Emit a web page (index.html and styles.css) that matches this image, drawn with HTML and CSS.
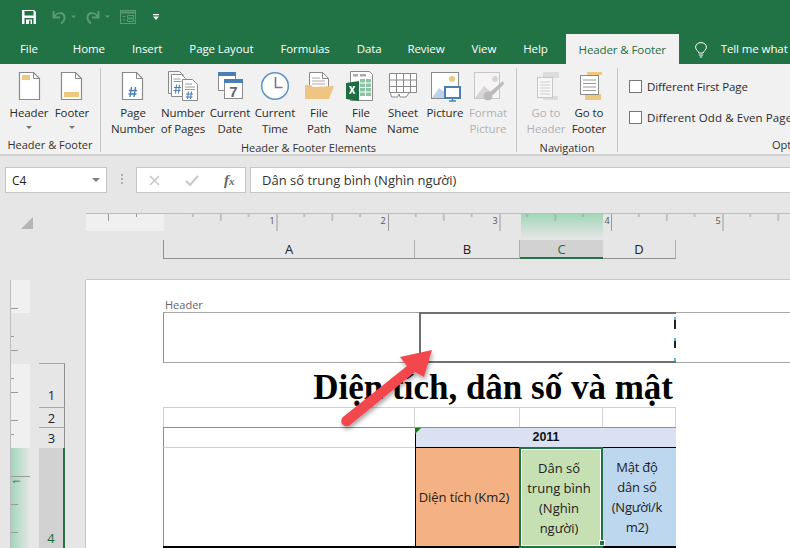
FILE: index.html
```html
<!DOCTYPE html>
<html lang="vi">
<head>
<meta charset="utf-8">
<title>Excel Header &amp; Footer</title>
<link rel="stylesheet" href="styles.css">
</head>
<body>
<div class="app">
  <div class="qat">
    <svg class="qi save" width="14" height="14" viewBox="0 0 14 14"><path d="M0 0h12l2 2v12H0z" fill="#fff"/><rect x="2.500" y="1" width="9" height="4.500" fill="#217346"/><rect x="2.500" y="8" width="9" height="6" fill="#217346"/><rect x="4" y="9.500" width="6" height="4.500" fill="#fff"/><rect x="7" y="10.500" width="1.500" height="3.500" fill="#217346"/></svg>
    <svg class="qi undo" width="26" height="16" viewBox="0 0 26 16"><path d="M2.500 2v6.500h6.500M3 8.500c2-5.500 9.500-6 10.500-.5.5 3-1.500 5-3.500 6.500" fill="none" stroke="#5a9a78" stroke-width="2"/><path d="M20 6.500h5l-2.500 2.500z" fill="#5a9a78"/></svg>
    <svg class="qi redo" width="26" height="16" viewBox="0 0 26 16"><path d="M12.500 2v6.500H6M12 8.500C10 3 2.500 2.500 1.500 8c-.5 3 1.500 5 3.500 6.500" fill="none" stroke="#5a9a78" stroke-width="2"/><path d="M19 6.500h5l-2.500 2.500z" fill="#5a9a78"/></svg>
    <svg class="qi form" width="16" height="14" viewBox="0 0 16 14"><rect x=".5" y=".5" width="15" height="13" fill="none" stroke="#5a9a78"/><path d="M1 2.500h14" stroke="#5a9a78" stroke-width="2"/><path d="M2.500 6.500h3M2.500 10h3M7.500 5.500h6v2.500h-6zM7.500 9h6v2.500h-6z" fill="none" stroke="#5a9a78"/></svg>
    <svg class="qi more" width="6" height="6" viewBox="0 0 6 6"><path d="M0 0h6v1.300H0z" fill="#fff"/><path d="M0 2.500h6L3 6z" fill="#fff"/></svg>
  </div>
  <nav class="tabs">
    <span class="tab t-file">File</span>
    <span class="tab t-home">Home</span>
    <span class="tab t-insert">Insert</span>
    <span class="tab t-layout">Page Layout</span>
    <span class="tab t-formulas">Formulas</span>
    <span class="tab t-data">Data</span>
    <span class="tab t-review">Review</span>
    <span class="tab t-view">View</span>
    <span class="tab t-help">Help</span>
    <span class="tab active">Header &amp; Footer</span>
    <svg class="bulb" width="12" height="16" viewBox="0 0 12 16"><path d="M3.800 11C3.400 8.800.6 8 .6 5.200.6 2.500 3 .6 6 .6s5.400 1.900 5.400 4.600c0 2.800-2.800 3.600-3.200 5.800z" fill="none" stroke="#fff"/><path d="M3.800 13h4.400M4.800 15h2.400" stroke="#fff"/></svg>
    <span class="tab tell">Tell me what</span>
  </nav>
  <section class="ribbon">
    <div class="group g-hf">
      <div class="btns">
        <div class="btn w-44">
          <svg class="ico" width="32" height="32" viewBox="0 0 32 32"><path d="M6.500 .5h14l6 6v21h-20z" fill="#fff" stroke="#8a8a8a" stroke-width="1.200"/><path d="M20.500 .5v6h6" fill="none" stroke="#8a8a8a"/><rect x="9" y="3" width="8" height="5" fill="#edc87e"/></svg>
          <span class="lbl">Header</span><span class="caret"></span>
        </div>
        <div class="btn w-42">
          <svg class="ico" width="32" height="32" viewBox="0 0 32 32"><path d="M5.500 .5h14l6 6v21h-20z" fill="#fff" stroke="#8a8a8a" stroke-width="1.200"/><path d="M19.500 .5v6h6" fill="none" stroke="#8a8a8a"/><rect x="8" y="20" width="15" height="5" fill="#edc87e"/></svg>
          <span class="lbl">Footer</span><span class="caret"></span>
        </div>
      </div>
      <div class="gname">Header &amp; Footer</div>
    </div>
    <div class="group g-el">
      <div class="btns">
        <div class="btn w-50">
          <svg class="ico" width="32" height="32" viewBox="0 0 32 32"><path d="M5.500 .5h14l6 6v21h-20z" fill="#fff" stroke="#8a8a8a" stroke-width="1.200"/><path d="M19.500 .5v6h6" fill="none" stroke="#8a8a8a"/><path d="M14.500 15l-1.500 10M18.500 15l-1.500 10M12 18.500h8M11.500 22h8" stroke="#4a7fb5" stroke-width="1.400" fill="none"/></svg>
          <span class="lbl">Page<br>Number</span>
        </div>
        <div class="btn w-50">
          <svg class="ico" width="32" height="32" viewBox="0 0 32 32"><path d="M1.500 -.5h11l4 4v18h-15z" fill="#f4f4f4" stroke="#8a8a8a"/><path d="M4.500 2.500h10l4 4v18h-14z" fill="#fff" stroke="#8a8a8a"/><path d="M6.500 7h7M6.500 9.500h8" stroke="#9a9a9a"/><path d="M9.500 12.500l-1 9M12.500 12.500l-1 9M7 15.500h7M6.500 18.500h7" stroke="#4a7fb5" stroke-width="1.100" fill="none"/><path d="M15.500 7.500h10l5 5v16h-15z" fill="#fff" stroke="#8a8a8a"/><path d="M18 12h7M18 15h10M18 17.500h10" stroke="#9a9a9a"/><path d="M21.500 19.500l-1 7.500M24.500 19.500l-1 7.500M19 22h7M18.500 25h7" stroke="#4a7fb5" stroke-width="1.100" fill="none"/></svg>
          <span class="lbl">Number<br>of Pages</span>
        </div>
        <div class="btn w-44">
          <svg class="ico" width="32" height="32" viewBox="0 0 32 32"><rect x="4.500" y=".5" width="17" height="18" fill="#fff" stroke="#8a8a8a"/><rect x="4" y="0" width="18" height="4" fill="#4a7fb5"/><rect x="10.500" y="7.500" width="18" height="19" fill="#fff" stroke="#8a8a8a"/><rect x="10" y="7" width="19" height="4" fill="#4a7fb5"/><text class="seven" x="19.500" y="24.500" text-anchor="middle">7</text></svg>
          <span class="lbl">Current<br>Date</span>
        </div>
        <div class="btn w-46">
          <svg class="ico" width="32" height="32" viewBox="0 0 32 32"><circle cx="16" cy="14" r="13.300" fill="#fff" stroke="#5b93c7" stroke-width="1.500"/><path d="M16.500 5v10.500h7" fill="none" stroke="#777" stroke-width="1.600"/></svg>
          <span class="lbl">Current<br>Time</span>
        </div>
        <div class="btn w-42">
          <svg class="ico" width="32" height="32" viewBox="0 0 32 32"><path d="M6.500 .5h13l6 6v14h-19z" fill="#fff" stroke="#8a8a8a"/><path d="M19.500 .5v6h6" fill="none" stroke="#8a8a8a"/><path d="M9 6h8M9 9h13M9 12h13" stroke="#aaa"/><path d="M2 13h6l2 2 21-1-5 13H2z" fill="#eec583"/></svg>
          <span class="lbl">File<br>Path</span>
        </div>
        <div class="btn w-42">
          <svg class="ico" width="32" height="32" viewBox="0 0 32 32"><path d="M5.500 -.5h19l3 3v26h-22z" fill="#fff" stroke="#8a8a8a"/><path d="M8 2h5v2.500H8zM15 2h6v2.500h-6z" fill="#aaa"/><path d="M15 7h5v3.500h-5zM21 7h5v3.500h-5zM15 11.500h5v3.500h-5zM21 11.500h5v3.500h-5zM15 16h5v3.500h-5zM21 16h5v3.500h-5zM15 20.500h5v3.500h-5zM21 20.500h5v3.500h-5z" fill="#8cc3a2"/><path d="M1 11l13-2v20L1 27z" fill="#1e6e42"/><path d="M4 14h2.200l1 2.400 1.100-2.500h2.100l-2 3.800 2 4.100H8.200l-1.100-2.500-1 2.400H3.900L6 17.800z" fill="#fff"/></svg>
          <span class="lbl">File<br>Name</span>
        </div>
        <div class="btn w-42">
          <svg class="ico" width="32" height="32" viewBox="0 0 32 32"><path d="M2.500 1.500h27v19h-27z" fill="#fff" stroke="#8a8a8a"/><path d="M3 8h26M3 14.500h26M9.500 2v18M16.500 2v18M23.500 2v18" stroke="#8a8a8a"/><path d="M3.500 21l1 4h6l1.500-3 1 3h6l3-4" fill="#fff" stroke="#8a8a8a"/></svg>
          <span class="lbl">Sheet<br>Name</span>
        </div>
        <div class="btn w-42">
          <svg class="ico" width="32" height="32" viewBox="0 0 32 32"><rect x="2.500" y=".5" width="27" height="26" fill="#fff" stroke="#8a8a8a"/><circle cx="23" cy="7" r="3" fill="#edc87e"/><path d="M3 26l7-10 4 3 3-2v9z" fill="#bcd2e8"/><rect x="16" y="15" width="15" height="11" fill="#fff" stroke="#4a7fb5" stroke-width="2"/><path d="M23.500 26v3M20 29h7" stroke="#4a7fb5" stroke-width="1.400"/></svg>
          <span class="lbl">Picture</span>
        </div>
        <div class="btn w-44 off">
          <svg class="ico" width="32" height="32" viewBox="0 0 32 32"><rect x="2.500" y=".5" width="25" height="26" fill="#f6f4f5" stroke="#c9c6c8"/><circle cx="23" cy="7" r="3" fill="#d8d5d7"/><path d="M3 26l9-12 8 7v5z" fill="#d8d5d7"/><path d="M18 20l13-11 1 3-11 11z" fill="#bdbabc"/><circle cx="16" cy="24" r="4.500" fill="#bdbabc"/></svg>
          <span class="lbl">Format<br>Picture</span>
        </div>
      </div>
      <div class="gname">Header &amp; Footer Elements</div>
    </div>
    <div class="group g-nav">
      <div class="btns">
        <div class="btn w-44 off">
          <svg class="ico" width="32" height="32" viewBox="0 0 32 32"><rect x="13" y="0" width="16" height="6" fill="#dcdcdc"/><rect x="13" y="24" width="15" height="4" fill="#dcdcdc"/><rect x="7.500" y="5.500" width="15" height="20" fill="#f7f7f7" stroke="#c6c6c6"/><path d="M10 10h10M10 13h10M10 16h10M10 19h10M10 22h10" stroke="#cfcfcf"/></svg>
          <span class="lbl">Go to<br>Header</span>
        </div>
        <div class="btn w-42">
          <svg class="ico" width="32" height="32" viewBox="0 0 32 32"><rect x="14" y="0" width="15" height="3" fill="#edc87e"/><rect x="12" y="22" width="16" height="6" fill="#edc87e"/><rect x="7.500" y="3.500" width="18" height="19" fill="#fff" stroke="#8a8a8a"/><path d="M10 8h13M10 11.500h13M10 15h13M10 18.500h13" stroke="#9a9a9a"/></svg>
          <span class="lbl">Go to<br>Footer</span>
        </div>
      </div>
      <div class="gname">Navigation</div>
    </div>
    <div class="group g-opt">
      <div class="checks">
        <label class="chk"><span class="box"></span>Different First Page</label>
        <label class="chk wide"><span class="box"></span>Different Odd &amp; Even Pages</label>
      </div>
      <div class="gname opt">Options</div>
    </div>
  </section>
  <div class="fbar">
    <div class="namebox"><span>C4</span><i class="nb-caret"></i></div>
    <div class="grip"></div>
    <div class="fx-box">
      <svg width="11" height="11" viewBox="0 0 11 11"><path d="M1 1l9 9M10 1l-9 9" stroke="#c8c8c8" stroke-width="1.600"/></svg>
      <svg width="14" height="11" viewBox="0 0 14 11"><path d="M1 6l4 4 8-9" fill="none" stroke="#c8c8c8" stroke-width="2"/></svg>
      <span class="fx">f<small>x</small></span>
    </div>
    <div class="finput">Dân số trung bình (Nghìn người)</div>
  </div>
  <div class="sheet">
    <div class="corner"><div class="tri"></div></div>
    <div class="top">
      <svg class="hruler" width="704" height="19" viewBox="86 0 704 19">
        <defs>
          <pattern id="ht" x="165" y="0" width="111.500" height="19" patternUnits="userSpaceOnUse">
            <path d="M27.800 1v3M83.600 1v3" stroke="#999"/>
            <path d="M55.800 1v7" stroke="#999"/>
            <path d="M.5 1v17" stroke="#999"/>
          </pattern>
          <linearGradient id="hg" x1="0" y1="0" x2="0" y2="1"><stop offset="0" stop-color="#9ed6b8"/><stop offset="1" stop-color="#e6e6e6"/></linearGradient>
        </defs>
        <rect x="86" y="1" width="78" height="17" fill="#f0f0f0"/>
        <rect x="521" y="0" width="82" height="26" fill="url(#hg)"/>
        <path d="M86 .5h704" stroke="#bdbdbd"/>
        <rect x="170" y="0" width="620" height="19" fill="url(#ht)"/>
        <path d="M108.500 1v7M136.500 1v3" stroke="#999" fill="none"/>
        <text class="rnum" x="272" y="11" text-anchor="middle">1</text>
        <text class="rnum" x="383" y="11" text-anchor="middle">2</text>
        <text class="rnum" x="495" y="11" text-anchor="middle">3</text>
        <text class="rnum" x="607" y="11" text-anchor="middle">4</text>
        <text class="rnum" x="718" y="11" text-anchor="middle">5</text>
      </svg>
      <div class="cols">
        <div class="ch ch-a">A</div>
        <div class="ch ch-b">B</div>
        <div class="ch ch-c">C</div>
        <div class="ch ch-d">D</div>
      </div>
    </div>
    <div class="left">
      <svg class="vruler" width="20" height="268" viewBox="0 0 20 268">
        <defs>
          <linearGradient id="vg" x1="0" y1="0" x2="1" y2="0"><stop offset="0" stop-color="#9ed6b8"/><stop offset="1" stop-color="#e6e6e6"/></linearGradient>
        </defs>
        <rect x="0" y="0" width="20" height="33" fill="#f0f0f0"/>
        <rect x="0" y="84" width="20" height="84" fill="#f0f0f0"/>
        <rect x="0" y="168" width="20" height="100" fill="url(#vg)"/>
        <path d="M.5 0v268" stroke="#bdbdbd"/>
        <path d="M1 28.500h7M1 56.500h3M1 70.500h7M1 98.500h3M1 112.500h7M1 140.500h7M1 154.500h3M1 196.500h19M1 224.500h7M1 252.500h7" stroke="#999"/>
        <text class="rnum" transform="translate(10 204) rotate(-90)">1</text>
      </svg>
      <div class="rows">
        <div class="rh r1">1</div>
        <div class="rh r2">2</div>
        <div class="rh r3">3</div>
        <div class="rh r4">4</div>
      </div>
    </div>
    <main class="page">
      <div class="hlabel">Header</div>
      <div class="hrow">
        <div class="hc hc-l"></div>
        <div class="hc hc-m"></div>
        <div class="hc hc-r"></div>
      </div>
      <div class="title">Diện tích, dân số và mật</div>
      <div class="grid g-blank"><div></div><div></div><div></div><div></div></div>
      <div class="grid g-year"><div class="y0"><i class="flag"></i></div><div class="y1">2011</div></div>
      <div class="grid g-head">
        <div class="c0"></div>
        <div class="c1">Diện tích (Km2)</div>
        <div class="c2">Dân số<br>trung bình<br>(Nghìn<br>người)<i class="handle"></i></div>
        <div class="c3">Mật độ<br>dân số<br>(Người/k<br>m2)</div>
      </div>
      <svg class="arrow" width="110" height="95" viewBox="335 340 110 95">
        <defs><filter id="sh" x="-20%" y="-20%" width="150%" height="150%"><feDropShadow dx="1" dy="3" stdDeviation="2" flood-color="#000" flood-opacity=".35"/></filter></defs>
        <path filter="url(#sh)" d="M432 350L400 357L407 366L343 417A5 5 0 0 0 350 425L415 372L424 377z" fill="#f2464e"/>
      </svg>
    </main>
  </div>
</div>
</body>
</html>
```
FILE: styles.css
```css
* { box-sizing: border-box; }
html, body { margin: 0; padding: 0; }
body { font-family: "Open Sans", "Liberation Sans", sans-serif; font-size: 12px; color: #222; overflow: hidden; background: #e6e6e6; }
.app { width: 790px; height: 548px; overflow: hidden; display: flex; flex-direction: column; }

.qat { height: 32px; background: #217346; display: flex; align-items: center; padding: 2px 0 0 22px; flex: none; }
.qi { flex: none; display: block; }
.undo { margin-left: 15px; }
.redo { margin-left: 9px; }
.form { margin-left: 8px; }
.more { margin-left: 17px; }

.tabs { height: 32px; background: #217346; display: flex; align-items: stretch; flex: none; }
.tab { color: #fff; font-size: 11.5px; display: flex; align-items: center; letter-spacing: -.1px; white-space: nowrap; padding-top: 1px; }
.t-file { margin-left: 20px; }
.t-home { margin-left: 35px; }
.t-insert { margin-left: 27px; }
.t-layout { margin-left: 27px; }
.t-formulas { margin-left: 27px; }
.t-data { margin-left: 27px; }
.t-review { margin-left: 26px; }
.t-view { margin-left: 27px; }
.t-help { margin-left: 27px; }
.tab.active { margin: 2px 0 0 18px; width: 113px; justify-content: center; background: #f1f1f1; color: #1e6e42; padding-top: 0; }
.bulb { margin: 10px 0 0 16px; flex: none; }
.tell { margin-left: 14px; }

.ribbon { height: 92px; background: #f1f1f1; border-bottom: 2px solid #d2d2d2; display: flex; flex: none; padding-top: 4px; }
.group { display: flex; flex-direction: column; border-right: 1px solid #c6c6c6; height: 84px; flex: none; }
.g-hf { width: 101px; padding-left: 7px; }
.g-el { width: 416px; padding-left: 7px; }
.g-nav { width: 101px; padding-left: 7px; }
.g-opt { flex: 1; border-right: 0; overflow: hidden; }
.btns { display: flex; height: 68px; }
.btn { display: flex; flex-direction: column; align-items: center; flex: none; padding-top: 4px; }
.ico { flex: none; display: block; margin-bottom: 1px; overflow: visible; }
.lbl { text-align: center; line-height: 16px; font-size: 11.5px; letter-spacing: -.1px; white-space: nowrap; color: #2b2b2b; }
.off .lbl { color: #b1b1b1; }
.caret { width: 0; height: 0; border: 3px solid transparent; border-top: 3px solid #777; border-bottom: 0; margin-top: 5px; }
.w-42 { width: 42px; }
.w-44 { width: 44px; }
.w-46 { width: 46px; }
.w-50 { width: 50px; }
.gname { text-align: center; font-size: 11px; line-height: 14px; color: #333; margin-top: 5px; white-space: nowrap; }
.g-hf .gname, .g-el .gname, .g-nav .gname { margin-left: -7px; }
.gname.opt { text-align: left; margin-left: 154px; }
.checks { height: 68px; padding: 9px 0 0 11px; display: flex; flex-direction: column; gap: 12px; }
.chk { display: flex; align-items: center; gap: 5px; font-size: 11.5px; letter-spacing: -.1px; white-space: nowrap; height: 19px; color: #2b2b2b; }
.chk.wide { letter-spacing: .1px; }
.box { width: 13px; height: 13px; background: #fff; border: 1px solid #777; flex: none; }

.fbar { height: 43px; flex: none; display: flex; padding: 11px 0 6px 5px; background: #e6e6e6; }
.namebox { width: 102px; height: 26px; background: #fff; border: 1px solid #c6c6c6; display: flex; align-items: center; justify-content: space-between; padding: 0 6px; font-size: 12px; }
.nb-caret { width: 0; height: 0; border: 4px solid transparent; border-top: 4px solid #808080; border-bottom: 0; }
.grip { width: 2px; height: 12px; margin: 7px 13px 0 14px; background: repeating-linear-gradient(#b0b0b0 0 2px, transparent 2px 4px); }
.fx-box { width: 110px; height: 26px; background: #fff; border: 1px solid #c6c6c6; display: flex; align-items: center; padding-left: 12px; gap: 25px; }
.fx-box svg { flex: none; }
.fx { font-family: "Liberation Serif", serif; font-style: italic; font-weight: bold; font-size: 15px; color: #666; }
.fx small { font-size: 11px; }
.finput { flex: 1; height: 26px; margin-left: 4px; background: #fff; border: 1px solid #c6c6c6; border-right: 0; display: flex; align-items: center; padding-left: 11px; font-size: 13px; color: #333; }

.sheet { flex: 1; min-height: 0; display: grid; grid-template-columns: 86px 704px; grid-template-rows: 81px 268px; background: #e6e6e6; }
.corner { padding: 18px 0 0 21px; }
.tri { width: 0; height: 0; border-style: solid; border-width: 0 0 12px 12px; border-color: transparent transparent #b4b4b4 transparent; }
.top { padding-top: 14px; border-bottom: 1px solid #c6c6c6; height: 81px; }
.hruler { display: block; overflow: visible; }
.rnum { font-family: "Open Sans", "Liberation Sans", sans-serif; font-size: 9px; fill: #555; }
.seven { font-family: "Liberation Sans", sans-serif; font-size: 15px; font-weight: bold; fill: #666; }
.cols { display: flex; margin: 8px 0 0 77px; height: 19px; position: relative; }
.ch { display: flex; align-items: center; justify-content: center; border-bottom: 1px solid #8f8f8f; border-right: 1px solid #b0b0b0; font-size: 13px; color: #222; }
.ch-a { width: 252px; border-left: 1px solid #8f8f8f; }
.ch-b { width: 105px; }
.ch-c { width: 83px; background: #d2d2d2; border-bottom: 2px solid #217346; border-right: 0; color: #1e6e42; }
.ch-d { width: 73px; }

.left { display: flex; padding-left: 10px; border-right: 1px solid #c6c6c6; height: 268px; }
.vruler { display: block; flex: none; }
.rows { margin: 83px 0 0 9px; width: 26px; display: flex; flex-direction: column; flex: none; }
.rh { display: flex; align-items: flex-end; justify-content: center; border-right: 1px solid #8f8f8f; border-bottom: 1px solid #a8a8a8; font-size: 13px; line-height: 18px; color: #222; width: 26px; flex: none; }
.r1 { height: 45px; border-top: 1px solid #a8a8a8; padding-bottom: 3px; }
.r2 { height: 20px; }
.r3 { height: 20px; border-bottom: 0; padding-bottom: 1px; }
.r4 { height: 100px; background: #d2d2d2; border-bottom: 0; border-right: 2px solid #217346; color: #1e6e42; padding-bottom: 1px; }

.page { background: #fff; position: relative; padding: 0 0 0 77px; overflow: hidden; height: 268px; width: 704px; }
.hlabel { font-size: 11px; line-height: 14px; color: #666; height: 32px; padding: 18px 0 0 2px; white-space: nowrap; }
.hrow { display: flex; height: 51px; }
.hc { border-top: 1px solid #a6a6a6; border-bottom: 1px solid #a6a6a6; }
.hc-l { width: 256px; border-left: 1px solid #8f8f8f; }
.hc-m { width: 257px; border: 2px solid #707070; position: relative; }
.hc-m::after { content: ""; position: absolute; right: -2px; top: 0; bottom: 0; width: 2px; background: linear-gradient(#fff 0 3px, #5ab4e6 3px 6px, #222 6px 15px, #fff 15px 24px, #5ab4e6 24px 27px, #222 27px 34px, #fff 34px 44px, #5ab4e6 44px 47px); }
.hc-r { flex: 1; }
.title { width: 513px; height: 45px; font-family: "Liberation Serif", serif; font-weight: bold; font-size: 35px; line-height: 49px; text-align: right; white-space: nowrap; color: #000; border-bottom: 1px solid #cfcfcf; padding-right: 3px; }
.grid { display: grid; grid-template-columns: 252px 105px 83px 73px; width: 513px; }
.g-blank { height: 20px; border-bottom: 1px solid #8f8f8f; }
.g-blank div { border-right: 1px solid #d5d5d5; }
.g-blank div:first-child { border-left: 1px solid #cfcfcf; }
.g-year { height: 20px; grid-template-columns: 252px 261px; }
.y0 { border-bottom: 1px solid #cfcfcf; border-left: 1px solid #8f8f8f; position: relative; }
.y1 { background: #d9e1f2; border-left: 1px solid #000; border-bottom: 1px solid #000; text-align: center; font-weight: bold; font-size: 12.5px; line-height: 19px; font-family: "Liberation Sans", sans-serif; color: #111; }
.flag { position: absolute; left: 251px; top: 0; width: 0; height: 0; border-style: solid; border-width: 6px 6px 0 0; border-color: #107c10 transparent transparent transparent; z-index: 1; }
.g-head { height: 100px; border-bottom: 2px solid #000; }
.g-head > div { display: flex; align-items: center; justify-content: center; text-align: center; font-size: 13px; line-height: 20px; color: #222; }
.c0 { background: #fff; border-left: 1px solid #8f8f8f; }
.g-head .c1 { background: #f4b183; border-left: 1px solid #000; white-space: nowrap; letter-spacing: -.1px; padding-right: 8px; }
.g-head .c2 { background: #c6e0b4; border: 2px solid #217346; outline: 1px solid #fff; outline-offset: -3px; position: relative; margin: -1px 0 -2px -1px; padding-right: 4px; }
.g-head .c3 { background: #bdd7ee; letter-spacing: -.2px; padding-right: 5px; white-space: nowrap; }
.handle { position: absolute; right: -4px; bottom: 0; width: 6px; height: 6px; background: #217346; border: 1px solid #fff; }
.arrow { position: absolute; left: 249px; top: 60px; overflow: visible; }
```
